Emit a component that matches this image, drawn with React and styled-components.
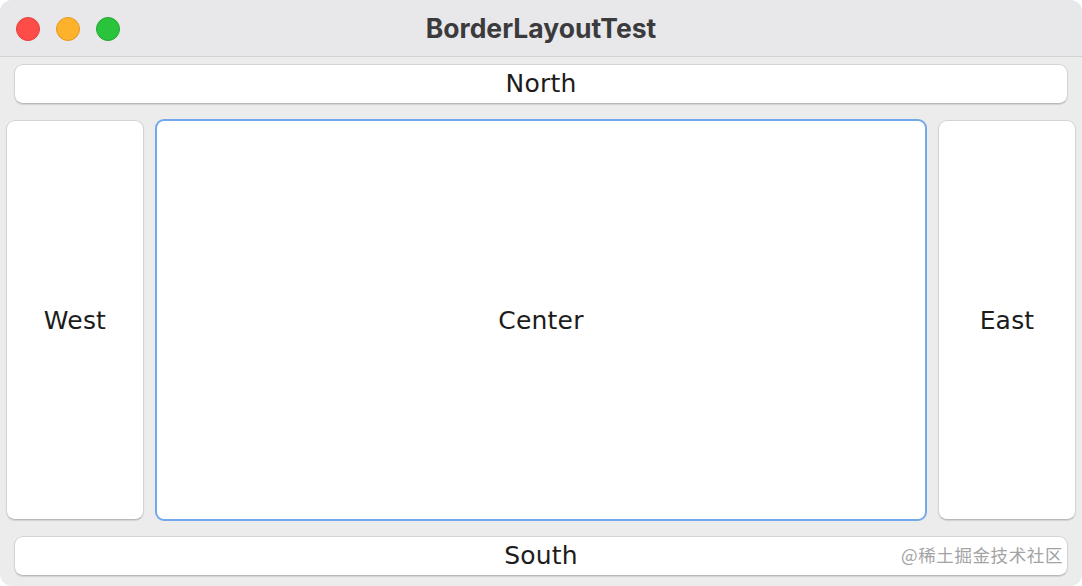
import React from "react";
import styled, { createGlobalStyle } from "styled-components";

const Global = createGlobalStyle`
  html, body { margin: 0; padding: 0; background: #ffffff; }
  body { font-family: "DejaVu Sans", "Noto Sans", sans-serif; }
  #root { width: 1082px; height: 586px; }
`;

const Window = styled.div`
  position: relative;
  width: 1082px;
  height: 586px;
  box-sizing: border-box;
  border-radius: 12px;
  overflow: hidden;
  background: #ececec;
  display: flex;
  flex-direction: column;
`;

const TitleBar = styled.div`
  height: 57px;
  flex: none;
  box-sizing: border-box;
  background: #e8e8ea;
  border-bottom: 1px solid #d2d2d2;
  display: flex;
  align-items: center;
  position: relative;
  padding-left: 16px;
`;

const Lights = styled.div`
  display: flex;
  gap: 16px;
  margin-top: 1px;
`;

const Light = styled.span`
  width: 24px;
  height: 24px;
  border-radius: 50%;
  box-sizing: border-box;
  background: ${(p) => p.$c};
  border: 1px solid ${(p) => p.$b};
`;

const Title = styled.div`
  position: absolute;
  left: 0;
  right: 0;
  top: 0;
  bottom: 0;
  display: flex;
  align-items: center;
  justify-content: center;
  font-family: Inter, "Liberation Sans", sans-serif;
  font-weight: 700;
  font-size: 26.5px;
  color: #3b3b3d;
  padding-left: 0px;
  pointer-events: none;
`;

const Content = styled.div`
  flex: 1;
  display: flex;
  flex-direction: column;
  padding: 7px 6px 10px 6px;
  gap: 15px;
  min-height: 0;
`;

const Middle = styled.div`
  flex: 1;
  display: flex;
  gap: 11px;
  align-items: center;
`;

const Button = styled.div`
  box-sizing: border-box;
  background: #ffffff;
  border-radius: 9px;
  border: 1px solid #d3d3d3;
  border-bottom-color: #b9b9b9;
  box-shadow: 0 1px 1px rgba(0, 0, 0, 0.12);
  display: flex;
  align-items: center;
  justify-content: center;
  font-family: "DejaVu Sans", "Noto Sans", sans-serif;
  font-size: 25px;
  color: #1c1c1c;
  letter-spacing: 0.2px;
`;

const Bar = styled(Button)`
  height: 40px;
  flex: none;
  margin: 0 8px;
  padding-bottom: 1px;
`;

const Side = styled(Button)`
  width: 138px;
  height: 400px;
  flex: none;
`;

const Center = styled(Button)`
  flex: 1;
  align-self: stretch;
  border: 2px solid #74a8ec;
  box-shadow: none;
`;

const Watermark = styled.div`
  position: absolute;
  right: 19px;
  bottom: 19px;
  font-family: "Noto Sans CJK SC", "Noto Sans", sans-serif;
  font-size: 17.5px;
  color: #a3a3a3;
  letter-spacing: 0.6px;
  text-shadow: 0 0 2px rgba(255, 255, 255, 0.8);
`;

export default function App() {
  return (
    <>
      <Global />
      <Window>
        <TitleBar>
          <Lights>
            <Light $c="#fe4c48" $b="#e2403c" />
            <Light $c="#feb12a" $b="#e29a1f" />
            <Light $c="#2ac33c" $b="#22a632" />
          </Lights>
          <Title>BorderLayoutTest</Title>
        </TitleBar>
        <Content>
          <Bar>North</Bar>
          <Middle>
            <Side>West</Side>
            <Center>Center</Center>
            <Side>East</Side>
          </Middle>
          <Bar>South</Bar>
        </Content>
        <Watermark>@稀土掘金技术社区</Watermark>
      </Window>
    </>
  );
}
